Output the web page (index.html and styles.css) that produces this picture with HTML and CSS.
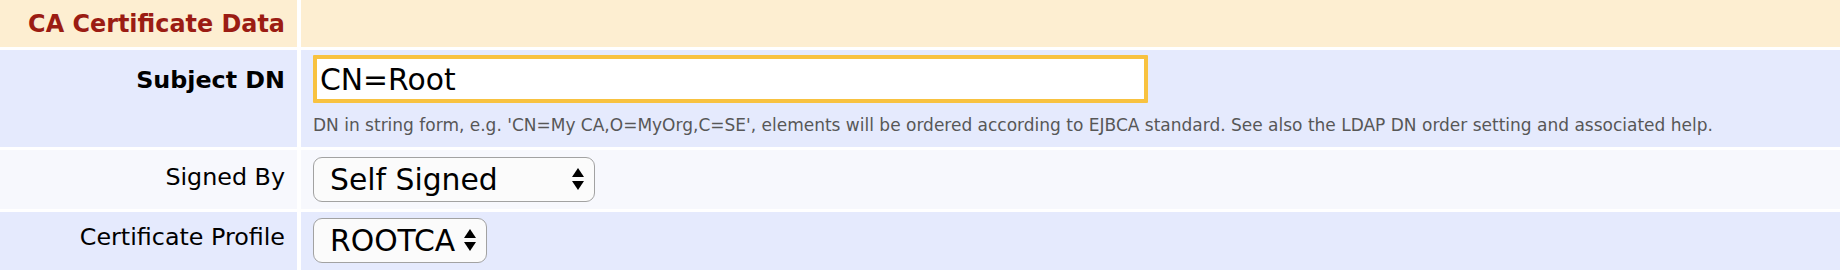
FILE: index.html
```html
<!DOCTYPE html>
<html lang="en">
<head>
    <title>Create CA</title>
    <link rel="stylesheet" href="styles.css">
</head>
<body>

<div class="form">
    <div class="label head">CA Certificate Data</div>
    <div class="value head"></div>

    <div class="label row-a subject">Subject DN</div>
    <div class="value row-a top">
        <input type="text" id="subjectdn" class="text" value="CN=Root">
        <div class="help">DN in string form, e.g. 'CN=My CA,O=MyOrg,C=SE', elements will be ordered according to EJBCA standard. See also the LDAP DN order setting and associated help.</div>
    </div>

    <div class="label row-b signed-label">Signed By</div>
    <div class="value row-b">
        <span class="select signed">
            <select id="signedby">
                <option>Self Signed</option>
            </select>
            <svg class="arrows" viewBox="0 0 14 24" width="14" height="24">
                <path d="M7 1 L13 10 L1 10 Z"/>
                <path d="M7 23 L13 14 L1 14 Z"/>
            </svg>
        </span>
    </div>

    <div class="label row-a profile-label">Certificate Profile</div>
    <div class="value row-a profile-value">
        <span class="select profile">
            <select id="certprofile">
                <option>ROOTCA</option>
            </select>
            <svg class="arrows" viewBox="0 0 14 24" width="14" height="24">
                <path d="M7 1 L13 10 L1 10 Z"/>
                <path d="M7 23 L13 14 L1 14 Z"/>
            </svg>
        </span>
    </div>
</div>

</body>
</html>
```

FILE: styles.css
```css
body {
    font-family: "DejaVu Sans", Verdana, sans-serif;
    margin: 0;
    padding: 0;
    background-color: #fff;
}
.form {
    display: grid;
    grid-template-columns: 297px 1fr;
    grid-template-rows: 47px 97px 59px 60px;
    column-gap: 4px;
    row-gap: 3px;
}
.label {
    box-sizing: border-box;
    font-size: 23.8px;
    line-height: 28px;
    padding-right: 12px;
    color: #000;
    display: flex;
    align-items: center;
    justify-content: flex-end;
}
.head {
    background-color: #fdeed1;
}
.label.head {
    color: #9b1c13;
    font-weight: bold;
    font-size: 23.9px;
    align-items: flex-start;
    padding-top: 10px;
}
.row-a {
    background-color: #e5eafd;
}
.row-b {
    background-color: #f7f8fd;
}
.label.subject {
    font-weight: bold;
    align-items: flex-start;
    padding-top: 16px;
}
.signed-label {
    padding-bottom: 6px;
}
.profile-label {
    padding-bottom: 10px;
}
.value {
    padding-left: 12px;
    display: flex;
    flex-direction: column;
    justify-content: center;
    align-items: flex-start;
}
.value.top {
    justify-content: flex-start;
    padding-top: 5px;
}
.value.profile-value {
    justify-content: flex-start;
    padding-top: 6px;
}
.text {
    box-sizing: border-box;
    width: 835px;
    height: 48px;
    border: 4px solid #f8c240;
    border-radius: 1px;
    outline: none;
    padding: 0 3px;
    font-family: "DejaVu Sans", Verdana, sans-serif;
    font-size: 29.8px;
    color: #000;
    background-color: #fff;
}
.help {
    margin-top: 12px;
    font-size: 17px;
    color: #575757;
}
.select {
    position: relative;
    display: inline-block;
}
.select select {
    -webkit-appearance: none;
    appearance: none;
    box-sizing: border-box;
    height: 45px;
    border: 1.5px solid #a2a2a2;
    border-radius: 9px;
    background-color: #fbfbfb;
    padding: 0 0 0 16px;
    font-family: "DejaVu Sans", Verdana, sans-serif;
    font-size: 29.8px;
    color: #000;
}
.signed select {
    width: 282px;
}
.profile select {
    width: 174px;
}
.arrows {
    position: absolute;
    right: 10px;
    top: 10px;
    fill: #000;
    pointer-events: none;
}
```
